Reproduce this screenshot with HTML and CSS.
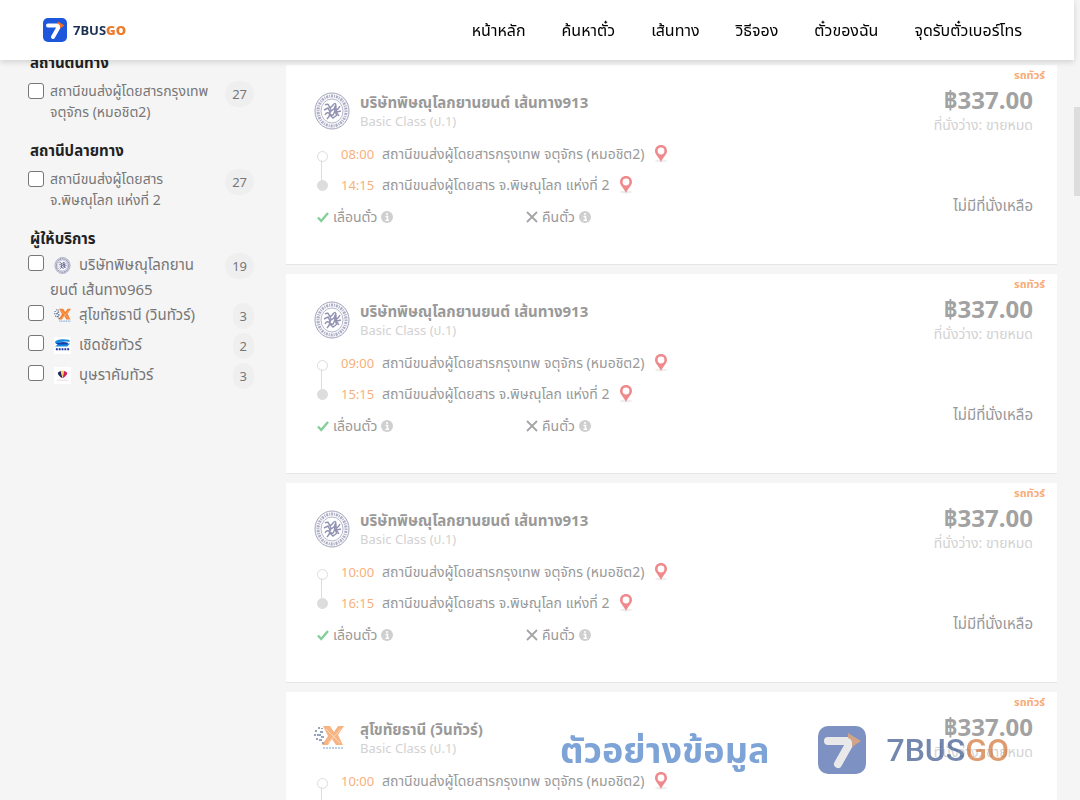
FILE: index.html
```
<!DOCTYPE html>
<html lang="th">
<head>
  <meta charset="UTF-8">
  <meta name="viewport" content="width=device-width, initial-scale=1.0">
  <title>7BUSGO</title>
  <link rel="stylesheet" href="styles.css">
</head>
<body>
  <!-- icons -->
  <svg class="sprite" aria-hidden="true">
    <symbol id="brand" viewBox="0 0 48 48">
      <rect width="48" height="48" rx="10" fill="#1d57dc"/>
      <path d="M10 15H33L20 38" fill="none" stroke="#fff" stroke-width="8" stroke-linecap="round" stroke-linejoin="round"/>
      <path d="M30 7L43 15L34 21Q35 13 30 12Z" fill="#f07028"/>
    </symbol>
    <symbol id="seal" viewBox="0 0 36 38">
      <ellipse cx="18" cy="19" rx="17" ry="18" fill="#f6f6fa" stroke="#66688c" stroke-width="1"/>
      <ellipse cx="18" cy="19" rx="14" ry="15" fill="none" stroke="#7779a0" stroke-width="3" stroke-dasharray="1 1 2 1"/>
      <ellipse cx="18" cy="19" rx="11" ry="12" fill="#fff" stroke="#8889aa" stroke-width="1"/>
      <path d="M11 13q3-2 4 1t4-1 3 2 4-1M10 18l4-2 2 4 5-4 2 4 4-1M11 23q2-4 5-1t4-1 5 3M13 27l3-4 3 3 4-3M14 12l3 6-2 6M22 12l-2 5 3 7" fill="none" stroke="#4a4c80" stroke-width="1.400"/>
    </symbol>
    <symbol id="win" viewBox="0 0 30 26">
      <path d="M9 1h7l4 6 4-6h6l-6 9 5 10h-7l-4-6-4 6H8l6-9z" fill="#f58232"/>
      <path d="M12 4l14 14M14 18L27 4" stroke="#ffc28f" stroke-width="1"/>
      <path d="M1 5h2v2H1zM4 2h2v2H4zM6 6h3v2H6zM0 9h2v2H0zM3 9h4v2H3zM7 11h3v2H7zM2 13h2v2H2zM5 14h3v2H5zM8 17h2v2H8zM7 3h2v1H7z" fill="#536a90"/>
      <path d="M9 23h20" stroke="#8fb0dc" stroke-width="2" stroke-dasharray="2 1"/>
    </symbol>
    <symbol id="cherd" viewBox="0 0 18 18">
      <rect width="18" height="18" fill="#fff"/>
      <path d="M1 5Q4 1 16 3L17 5Q7 4 4 7H17L14 10H1L4 8Q1 7 1 5Z" fill="#168be0"/>
      <path d="M2 7Q8 4 15 6L14 8H4Z" fill="#123ea8"/>
      <path d="M2 13H16" stroke="#1732a0" stroke-width="2" stroke-dasharray="2 1"/>
    </symbol>
    <symbol id="bussara" viewBox="0 0 18 18">
      <rect width="18" height="18" fill="#fff"/>
      <path d="M4 6L7 4L9 12Q4 9 4 6Z" fill="#27286a"/>
      <path d="M7 4H11L9 11Z" fill="#f4cf61"/>
      <path d="M11 4L14 6Q14 9 9 12Z" fill="#ce235c"/>
      <path d="M3 14H15" stroke="#e9ded4"/>
    </symbol>
    <symbol id="pin" viewBox="0 0 14 18">
      <ellipse cx="7" cy="16" rx="6" ry="1.500" fill="#eee"/>
      <path d="M7 0C3.400 0 1 2.600 1 6C1 9.500 4.500 11.500 7 17C9.500 11.500 13 9.500 13 6C13 2.600 10.600 0 7 0Z" fill="#f0898c"/>
      <circle cx="7" cy="6" r="3.400" fill="#fff"/>
    </symbol>
    <symbol id="check" viewBox="0 0 12 12">
      <path d="M1 6.500L4.200 10L11 2" fill="none" stroke="#82cf9a" stroke-width="2.400"/>
    </symbol>
    <symbol id="cross" viewBox="0 0 12 12">
      <path d="M1 1L11 11M11 1L1 11" fill="none" stroke="#a5a5a5" stroke-width="1.800"/>
    </symbol>
    <symbol id="info" viewBox="0 0 12 12">
      <circle cx="6" cy="6" r="6" fill="#cfcfcf"/>
      <path d="M6 2V4M4.500 5.500H6.500V9M4.500 9.200H8" fill="none" stroke="#fff" stroke-width="1.500"/>
    </symbol>
  </svg>

  <header class="header">
    <a class="brand" href="#">
      <svg class="brand-icon"><use href="#brand"/></svg>
      <span>7BUS<b>GO</b></span>
    </a>
    <nav class="nav">
      <a href="#">หน้าหลัก</a>
      <a href="#">ค้นหาตั๋ว</a>
      <a href="#">เส้นทาง</a>
      <a href="#">วิธีจอง</a>
      <a href="#">ตั๋วของฉัน</a>
      <a href="#">จุดรับตั๋วเบอร์โทร</a>
    </nav>
  </header>

  <div class="page">
    <!-- filters -->
    <aside class="filters">
      <section class="group">
        <h2>สถานีต้นทาง</h2>
        <div class="option">
          <input type="checkbox" id="from1">
          <label for="from1">สถานีขนส่งผู้โดยสารกรุงเทพ<br>จตุจักร (หมอชิต2)</label>
          <span class="count">27</span>
        </div>
      </section>
      <section class="group">
        <h2>สถานีปลายทาง</h2>
        <div class="option">
          <input type="checkbox" id="to1">
          <label for="to1">สถานีขนส่งผู้โดยสาร<br>จ.พิษณุโลก แห่งที่ 2</label>
          <span class="count">27</span>
        </div>
      </section>
      <section class="group operators">
        <h2>ผู้ให้บริการ</h2>
        <div class="option">
          <input type="checkbox" id="op1">
          <label for="op1"><svg class="op-logo"><use href="#seal"/></svg>บริษัทพิษณุโลกยาน<br>ยนต์ เส้นทาง965</label>
          <span class="count">19</span>
        </div>
        <div class="option">
          <input type="checkbox" id="op2">
          <label for="op2"><svg class="op-logo"><use href="#win"/></svg>สุโขทัยธานี (วินทัวร์)</label>
          <span class="count">3</span>
        </div>
        <div class="option">
          <input type="checkbox" id="op3">
          <label for="op3"><svg class="op-logo"><use href="#cherd"/></svg>เชิดชัยทัวร์</label>
          <span class="count">2</span>
        </div>
        <div class="option">
          <input type="checkbox" id="op4">
          <label for="op4"><svg class="op-logo"><use href="#bussara"/></svg>บุษราคัมทัวร์</label>
          <span class="count">3</span>
        </div>
      </section>
    </aside>

    <!-- trips -->
    <main class="trips">
      <article class="trip">
        <div class="info">
          <div class="company">
            <svg class="logo"><use href="#seal"/></svg>
            <div>
              <h3>บริษัทพิษณุโลกยานยนต์ เส้นทาง913</h3>
              <p>Basic Class (ป.1)</p>
            </div>
          </div>
          <ol class="stops">
            <li><time>08:00</time>สถานีขนส่งผู้โดยสารกรุงเทพ จตุจักร (หมอชิต2)<svg class="pin"><use href="#pin"/></svg></li>
            <li><time>14:15</time>สถานีขนส่งผู้โดยสาร จ.พิษณุโลก แห่งที่ 2<svg class="pin"><use href="#pin"/></svg></li>
          </ol>
          <div class="rules">
            <span><svg><use href="#check"/></svg>เลื่อนตั๋ว<svg><use href="#info"/></svg></span>
            <span><svg><use href="#cross"/></svg>คืนตั๋ว<svg><use href="#info"/></svg></span>
          </div>
        </div>
        <div class="fare">
          <span class="type">รถทัวร์</span>
          <strong>฿337.00</strong>
          <span class="seats">ที่นั่งว่าง: ขายหมด</span>
          <span class="soldout">ไม่มีที่นั่งเหลือ</span>
        </div>
      </article>

      <article class="trip">
        <div class="info">
          <div class="company">
            <svg class="logo"><use href="#seal"/></svg>
            <div>
              <h3>บริษัทพิษณุโลกยานยนต์ เส้นทาง913</h3>
              <p>Basic Class (ป.1)</p>
            </div>
          </div>
          <ol class="stops">
            <li><time>09:00</time>สถานีขนส่งผู้โดยสารกรุงเทพ จตุจักร (หมอชิต2)<svg class="pin"><use href="#pin"/></svg></li>
            <li><time>15:15</time>สถานีขนส่งผู้โดยสาร จ.พิษณุโลก แห่งที่ 2<svg class="pin"><use href="#pin"/></svg></li>
          </ol>
          <div class="rules">
            <span><svg><use href="#check"/></svg>เลื่อนตั๋ว<svg><use href="#info"/></svg></span>
            <span><svg><use href="#cross"/></svg>คืนตั๋ว<svg><use href="#info"/></svg></span>
          </div>
        </div>
        <div class="fare">
          <span class="type">รถทัวร์</span>
          <strong>฿337.00</strong>
          <span class="seats">ที่นั่งว่าง: ขายหมด</span>
          <span class="soldout">ไม่มีที่นั่งเหลือ</span>
        </div>
      </article>

      <article class="trip">
        <div class="info">
          <div class="company">
            <svg class="logo"><use href="#seal"/></svg>
            <div>
              <h3>บริษัทพิษณุโลกยานยนต์ เส้นทาง913</h3>
              <p>Basic Class (ป.1)</p>
            </div>
          </div>
          <ol class="stops">
            <li><time>10:00</time>สถานีขนส่งผู้โดยสารกรุงเทพ จตุจักร (หมอชิต2)<svg class="pin"><use href="#pin"/></svg></li>
            <li><time>16:15</time>สถานีขนส่งผู้โดยสาร จ.พิษณุโลก แห่งที่ 2<svg class="pin"><use href="#pin"/></svg></li>
          </ol>
          <div class="rules">
            <span><svg><use href="#check"/></svg>เลื่อนตั๋ว<svg><use href="#info"/></svg></span>
            <span><svg><use href="#cross"/></svg>คืนตั๋ว<svg><use href="#info"/></svg></span>
          </div>
        </div>
        <div class="fare">
          <span class="type">รถทัวร์</span>
          <strong>฿337.00</strong>
          <span class="seats">ที่นั่งว่าง: ขายหมด</span>
          <span class="soldout">ไม่มีที่นั่งเหลือ</span>
        </div>
      </article>

      <article class="trip">
        <div class="info">
          <div class="company">
            <svg class="logo small"><use href="#win"/></svg>
            <div>
              <h3>สุโขทัยธานี (วินทัวร์)</h3>
              <p>Basic Class (ป.1)</p>
            </div>
          </div>
          <ol class="stops">
            <li><time>10:00</time>สถานีขนส่งผู้โดยสารกรุงเทพ จตุจักร (หมอชิต2)<svg class="pin"><use href="#pin"/></svg></li>
          </ol>
        </div>
        <div class="fare">
          <span class="type">รถทัวร์</span>
          <strong>฿337.00</strong>
          <span class="seats">ที่นั่งว่าง: ขายหมด</span>
        </div>
      </article>
    </main>
  </div>

  <div class="watermark">
    <span class="sample">ตัวอย่างข้อมูล</span>
    <svg class="mark"><use href="#brand"/></svg>
    <span class="mark-name">7BUS<b>GO</b></span>
  </div>
  <div class="scrollbar"></div>
</body>
</html>
```
FILE: styles.css
```
* { box-sizing: border-box; }
body {
  margin: 0;
  height: 100vh;
  overflow: hidden;
  background: #f5f5f5;
  color: #777;
  font: 14px/22px "Noto Sans", "Noto Sans Thai", sans-serif;
}
h2, h3, p, ol { margin: 0; padding: 0; }
a { color: inherit; text-decoration: none; }
.sprite { position: absolute; width: 0; height: 0; }

/* header */
.header {
  position: fixed;
  z-index: 2;
  top: 0;
  left: 0;
  right: 6px;
  height: 60px;
  padding: 0 52px 0 43px;
  display: flex;
  align-items: center;
  justify-content: space-between;
  background: #fff;
  box-shadow: 0 2px 6px rgba(0, 0, 0, 0.15);
}
.brand {
  display: flex;
  align-items: center;
  gap: 6px;
  color: #1c3152;
  font-size: 13px;
  font-weight: bold;
}
.brand b { color: #ee7a2b; }
.brand-icon { width: 24px; height: 24px; }
.nav { display: flex; gap: 36px; color: #000; font-size: 16px; }

/* filters */
.page { display: flex; padding: 51px 23px 0 28px; }
.filters { width: 226px; margin-right: 32px; flex: none; }
.group { margin-bottom: 17px; }
.group h2 {
  padding-left: 2px;
  margin-bottom: 7px;
  color: #222;
  font-size: 15px;
  line-height: 22px;
}
.option { display: flex; align-items: flex-start; }
.option input {
  appearance: none;
  width: 16px;
  height: 16px;
  margin: 3px 6px 0 0;
  border: 1px solid #777;
  border-radius: 3px;
  background: #fff;
}
.option label { flex: 1; line-height: 21px; white-space: nowrap; }
.count {
  margin-top: 1px;
  padding: 2px 7px;
  border-radius: 13px;
  background: #efefef;
  font-size: 13px;
}
.group.operators h2 { margin-bottom: 3px; }
.operators .option { min-height: 30px; }
.operators label { font-size: 15px; line-height: 25px; }
.op-logo { width: 17px; height: 17px; margin: 0 8px 0 4px; vertical-align: middle; }

/* trips */
.trips { flex: 1; padding-top: 14px; }
.trip {
  display: flex;
  height: 200px;
  margin-bottom: 9px;
  padding-left: 28px;
  background: #fff;
  border-bottom: 1px solid #e6e6e6;
  color: #999;
}
.info { flex: 1; padding-top: 27px; }
.company { display: flex; height: 46px; }
.company h3 { font-size: 15px; line-height: 20px; }
.company p { color: #d2d2d2; font-size: 13px; line-height: 18px; }
.logo { width: 36px; height: 38px; margin-right: 10px; opacity: 0.6; }
.logo.small { width: 30px; margin-right: 16px; }
.stops { list-style: none; }
.stops li { display: flex; align-items: center; height: 31px; padding-left: 27px; white-space: nowrap; position: relative; }
.stops time { width: 41px; color: #f8b07c; font-size: 13px; }
.stops li::before {
  content: "";
  position: absolute;
  left: 3px;
  top: 13px;
  width: 9px;
  height: 9px;
  border: 1px solid #ddd;
  border-radius: 50%;
}
.stops li + li::before { top: 11px; background: #ddd; }
.stops li:first-child::after {
  content: "";
  position: absolute;
  left: 7px;
  top: 22px;
  width: 1px;
  height: 20px;
  background: #ddd;
}
.pin { width: 14px; height: 18px; margin-left: 9px; }
.rules { display: flex; padding: 3px 0 0 3px; }
.rules span { display: flex; align-items: center; gap: 4px; width: 209px; height: 28px; }
.rules svg { width: 12px; height: 12px; }
.fare {
  display: flex;
  flex-direction: column;
  align-items: flex-end;
  padding: 3px 24px 0 0;
}
.type { margin-right: -12px; color: #f7ac78; font-size: 11px; font-weight: bold; line-height: 14px; }
.fare strong { font-size: 24px; line-height: 36px; color: #a2a2a2; }
.seats { color: #d2d2d2; line-height: 14px; }
.soldout { margin-top: 62px; font-size: 15px; }

/* sample overlay */
.watermark {
  position: fixed;
  z-index: 1;
  right: 71px;
  bottom: 26px;
  height: 48px;
  display: flex;
  align-items: center;
  opacity: 0.6;
}
.sample { margin-right: 49px; color: #2766bd; font-size: 36px; font-weight: bold; }
.mark { width: 48px; height: 48px; margin-right: 20px; filter: saturate(0.7) brightness(0.86); }
.mark-name { color: #17377a; font: 500 32px/40px Roboto, sans-serif; }
.mark-name b { color: #cc5a13; font-weight: 500; }
.scrollbar {
  position: fixed;
  z-index: 3;
  top: 107px;
  right: 0;
  width: 6px;
  height: 89px;
  background: #ddd;
}
```
